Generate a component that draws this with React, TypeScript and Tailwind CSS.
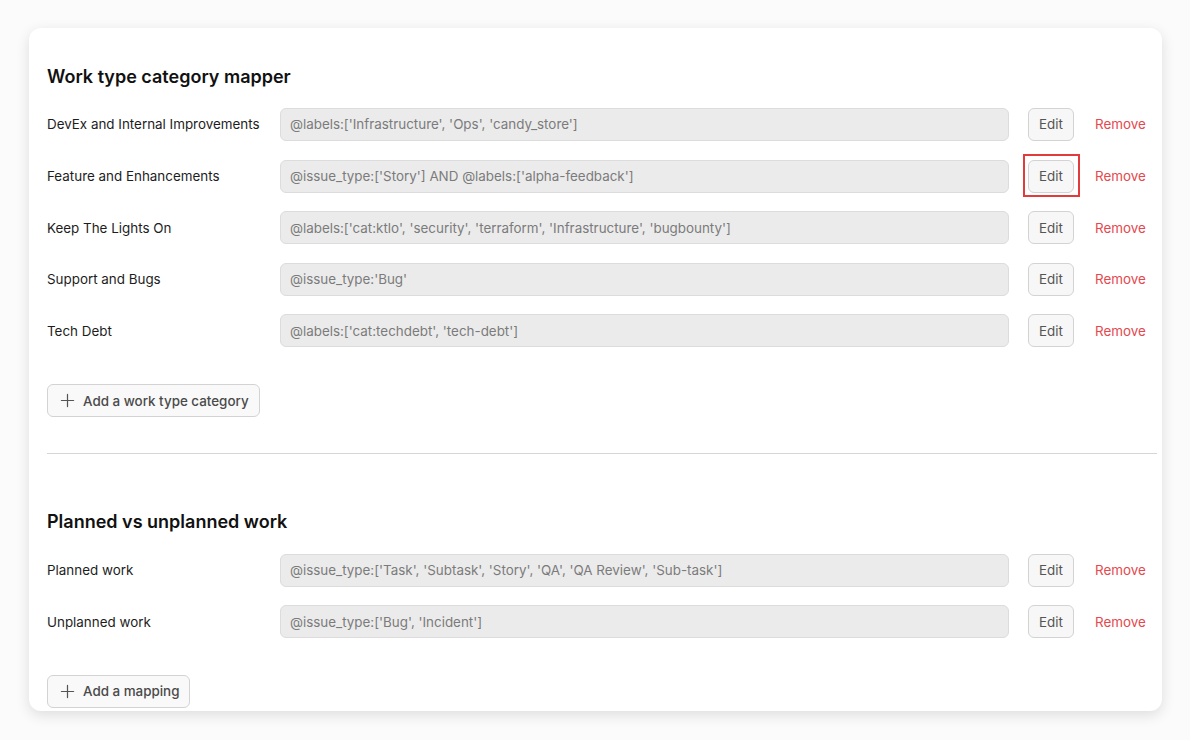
import React from "react";

type Row = { label: string; value: string; highlight?: boolean };

const workRows: Row[] = [
  { label: "DevEx and Internal Improvements", value: "@labels:['Infrastructure', 'Ops', 'candy_store']" },
  { label: "Feature and Enhancements", value: "@issue_type:['Story'] AND @labels:['alpha-feedback']", highlight: true },
  { label: "Keep The Lights On", value: "@labels:['cat:ktlo', 'security', 'terraform', 'Infrastructure', 'bugbounty']" },
  { label: "Support and Bugs", value: "@issue_type:'Bug'" },
  { label: "Tech Debt", value: "@labels:['cat:techdebt', 'tech-debt']" },
];

const planRows: Row[] = [
  { label: "Planned work", value: "@issue_type:['Task', 'Subtask', 'Story', 'QA', 'QA Review', 'Sub-task']" },
  { label: "Unplanned work", value: "@issue_type:['Bug', 'Incident']" },
];

function Plus() {
  return (
    <svg width="15" height="15" viewBox="0 0 16 16" fill="none" stroke="#555" strokeWidth="1.3" strokeLinecap="round">
      <path d="M8 1.5v13M1.5 8h13" />
    </svg>
  );
}

function MapRow({ row }: { row: Row }) {
  return (
    <div className="flex items-center h-[33px]">
      <div className="w-[233px] shrink-0 text-[13.4px] text-[#1d1d1d]">{row.label}</div>
      <div className="w-[729px] shrink-0 h-[33px] rounded-[6px] bg-[#ebebeb] border border-[#dcdcdc] flex items-center px-[9px] text-[13.4px] text-[#7b7b7b] whitespace-nowrap overflow-hidden">
        {row.value}
      </div>
      <div className="relative ml-[19px]">
        {row.highlight && (
          <div className="absolute left-[-5px] top-[-6px] w-[57px] h-[43px] border-2 border-[#e23b3b]" />
        )}
        <button className="relative w-[46px] h-[33px] rounded-[6px] bg-[#f7f7f7] border border-[#d3d3d3] text-[13.4px] text-[#555] flex items-center justify-center">
          Edit
        </button>
      </div>
      <button className="ml-[21px] text-[13.4px] text-[#e5484d]">Remove</button>
    </div>
  );
}

function AddButton({ label, width }: { label: string; width: string }) {
  return (
    <button
      className={`${width} h-[33px] rounded-[6px] bg-[#f9f9f9] border border-[#d3d3d3] flex items-center gap-[8px] pl-[12px] text-[13.4px] font-medium text-[#4a4a4a]`}
    >
      <Plus />
      {label}
    </button>
  );
}

export default function App() {
  return (
    <div
      className="w-[1190px] h-[740px] bg-[#fbfbfb] overflow-hidden pt-[28px] pl-[29px]"
      style={{ fontFamily: "Inter, 'Noto Sans', sans-serif" }}
    >
      <div className="w-[1133px] h-[683px] bg-white rounded-[12px] shadow-[0_4px_14px_rgba(0,0,0,0.12)] pl-[18px] pr-[5px] pt-[37px]">
        <h2 className="text-[18px] leading-[24px] font-semibold text-[#111]">Work type category mapper</h2>
        <div className="mt-[19px] flex flex-col gap-[18.6px]">
          {workRows.map((r) => (
            <MapRow key={r.label} row={r} />
          ))}
        </div>
        <div className="mt-[37px]">
          <AddButton label="Add a work type category" width="w-[213px]" />
        </div>
        <div className="mt-[36px] h-px bg-[#d6d6d6]" />
        <h2 className="mt-[56px] text-[18px] leading-[24px] font-semibold text-[#111]">Planned vs unplanned work</h2>
        <div className="mt-[19.5px] flex flex-col gap-[18.6px]">
          {planRows.map((r) => (
            <MapRow key={r.label} row={r} />
          ))}
        </div>
        <div className="mt-[36.5px]">
          <AddButton label="Add a mapping" width="w-[143px]" />
        </div>
      </div>
    </div>
  );
}
